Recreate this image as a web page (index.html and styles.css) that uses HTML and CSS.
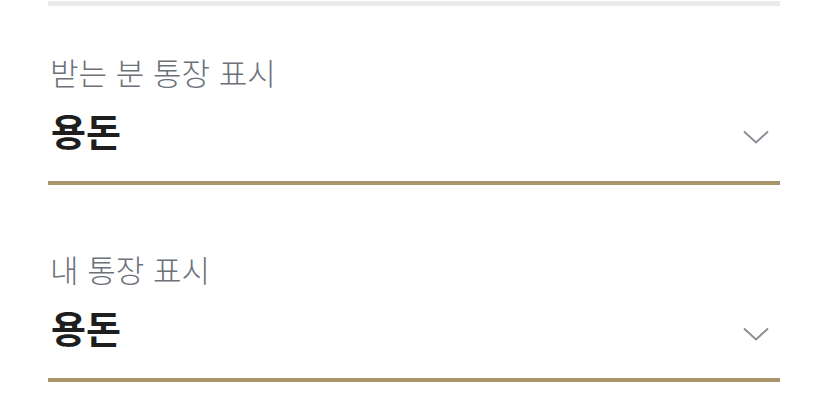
FILE: index.html
```html
<!DOCTYPE html>
<html lang="ko">
<head>
<meta charset="utf-8">
<link rel="stylesheet" href="styles.css">
</head>
<body>
<div class="page">
  <div class="top-rule"></div>
  <div class="field">
    <div class="label">받는 분 통장 표시</div>
    <div class="select">
      <span class="value">용돈</span>
      <svg class="chev" width="26" height="14" viewBox="0 0 26 14"><path d="M1 1.5 L13 12.5 L25 1.5" fill="none" stroke="#8a8e95" stroke-width="2"/></svg>
    </div>
  </div>
  <div class="field">
    <div class="label">내 통장 표시</div>
    <div class="select">
      <span class="value">용돈</span>
      <svg class="chev" width="26" height="14" viewBox="0 0 26 14"><path d="M1 1.5 L13 12.5 L25 1.5" fill="none" stroke="#8a8e95" stroke-width="2"/></svg>
    </div>
  </div>
</div>
</body>
</html>
```
FILE: styles.css
```css
html, body {
  margin: 0;
  padding: 0;
  background: #fff;
}
body {
  font-family: "Noto Sans CJK KR", "Noto Sans", sans-serif;
}
.page {
  padding: 1px 48px 0;
}
.top-rule {
  height: 5px;
  background: #ebebeb;
}
.field {
  padding-top: 46px;
}
.field + .field {
  padding-top: 64px;
}
.label {
  font-size: 31px;
  line-height: 40px;
  font-weight: 300;
  padding-left: 2px;
  color: #6c7077;
}
.select {
  display: flex;
  align-items: center;
  justify-content: space-between;
  height: 89px;
  border-bottom: 4px solid #a9956a;
}
.value {
  font-size: 38px;
  line-height: 50px;
  font-weight: 700;
  padding-left: 3px;
  margin-bottom: 13px;
  color: #1e1e1e;
}
.chev {
  margin-right: 11px;
}
```
